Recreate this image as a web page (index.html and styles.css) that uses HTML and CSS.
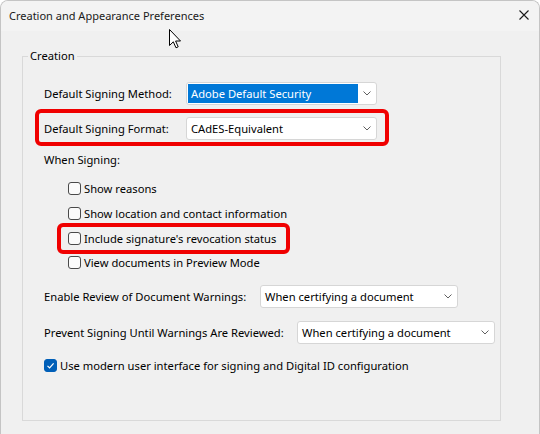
FILE: index.html
```html
<!DOCTYPE html>
<html>
<head>
<meta charset="utf-8">
<link rel="stylesheet" href="styles.css">
</head>
<body>
<div class="window">
  <div class="titlebar">
    <span class="title">Creation and Appearance Preferences</span>
    <svg class="close" width="10" height="10" viewBox="0 0 10 10"><path d="M0.5 0.5 L9.5 9.5 M9.5 0.5 L0.5 9.5" stroke="#1a1a1a" stroke-width="1.1" fill="none"/></svg>
  </div>
  <div class="content">
    <fieldset class="group">
      <legend>Creation</legend>
      <div class="group-body">
        <div class="field first">
          <span class="label w-short">Default Signing Method:</span>
          <div class="select w-191">
            <span class="value selected">Adobe Default Security</span>
            <span class="chev"><svg width="8" height="5" viewBox="0 0 8 5"><path d="M0.5 0.5 L4 4 L7.5 0.5" stroke="#606060" fill="none"/></svg></span>
          </div>
        </div>
        <div class="field callout callout-field">
          <span class="label w-short">Default Signing Format:</span>
          <div class="select w-191">
            <span class="value">CAdES-Equivalent</span>
            <span class="chev"><svg width="8" height="5" viewBox="0 0 8 5"><path d="M0.5 0.5 L4 4 L7.5 0.5" stroke="#606060" fill="none"/></svg></span>
          </div>
        </div>
        <div class="section-label">When Signing:</div>
        <div class="checks">
          <div class="check"><span class="box"></span><span>Show reasons</span></div>
          <div class="check"><span class="box"></span><span>Show location and contact information</span></div>
          <div class="check callout callout-check"><span class="box"></span><span>Include signature's revocation status</span></div>
          <div class="check"><span class="box"></span><span>View documents in Preview Mode</span></div>
        </div>
        <div class="field review">
          <span class="label w-review">Enable Review of Document Warnings:</span>
          <div class="select w-198">
            <span class="value">When certifying a document</span>
            <span class="chev"><svg width="8" height="5" viewBox="0 0 8 5"><path d="M0.5 0.5 L4 4 L7.5 0.5" stroke="#606060" fill="none"/></svg></span>
          </div>
        </div>
        <div class="field prevent">
          <span class="label w-prevent">Prevent Signing Until Warnings Are Reviewed:</span>
          <div class="select w-198">
            <span class="value">When certifying a document</span>
            <span class="chev"><svg width="8" height="5" viewBox="0 0 8 5"><path d="M0.5 0.5 L4 4 L7.5 0.5" stroke="#606060" fill="none"/></svg></span>
          </div>
        </div>
        <div class="check modern">
          <span class="box checked"><svg width="11" height="11" viewBox="0 0 11 11"><path d="M2.5 5.8 L4.6 7.9 L8.6 3.3" stroke="#fff" stroke-width="1.2" fill="none"/></svg></span>
          <span>Use modern user interface for signing and Digital ID configuration</span>
        </div>
      </div>
    </fieldset>
  </div>
  <svg class="cursor" width="13" height="20" viewBox="0 0 13 20"><path d="M0.5 0.5 L0.5 16.5 L4.3 12.8 L7 18.8 L9.2 17.8 L6.6 12 L11.5 12 Z" fill="#fff" stroke="#000" stroke-width="1" stroke-linejoin="miter"/></svg>
</div>
</body>
</html>
```
FILE: styles.css
```css
* { box-sizing: border-box; }
body {
  margin: 0;
  background: #fff;
  font-family: "Noto Sans", "Open Sans", sans-serif;
  font-size: 11.2px;
  color: #000;
}
.window {
  position: relative;
  width: 540px;
  height: 434px;
  border: 1px solid #c4c4c4;
  border-bottom: none;
  border-radius: 8px 8px 0 0;
  background: #f0f0f0;
  overflow: hidden;
  display: flex;
  flex-direction: column;
}
.titlebar {
  flex: none;
  height: 30px;
  background: #f3f3f3;
  display: flex;
  align-items: center;
  justify-content: space-between;
  padding: 0 10px 0 8px;
}
.title { color: #1a1a1a; line-height: 16px; font-size: 11px; }
.close { margin-bottom: 2px; }
.content { padding: 17px 0 0 21px; }
.group {
  margin: 0;
  width: 479px;
  border: 1px solid #d9d9d9;
  padding: 0 0 47px 5px;
}
.group legend {
  padding: 0 2px;
  line-height: 16px;
}
.group-body { padding: 18px 0 0 16px; }
.field { display: flex; align-items: center; }
.label { flex: none; line-height: 16px; white-space: nowrap; }
.w-short { width: 142px; }
.w-review { width: 216px; }
.w-prevent { width: 253px; }
.select {
  flex: none;
  height: 23px;
  background: #fff;
  border: 1px solid #d6d6d6;
  border-radius: 3px;
  display: flex;
  align-items: center;
  padding-left: 1px;
}
.w-191 { width: 191px; }
.w-198 { width: 198px; }
.value {
  flex: 1;
  height: 19px;
  line-height: 19px;
  padding-left: 3px;
  white-space: nowrap;
}
.value.selected { background: #0078d7; color: #fff; }
.chev {
  flex: none;
  width: 18px;
  display: flex;
  justify-content: center;
  align-items: center;
}
.callout {
  border: 4px solid #f00000;
  border-radius: 6px;
  width: fit-content;
}
.callout-field {
  margin: 4px 0 0 -9px;
  padding: 4px 8px 2px 5px;
}
.section-label { margin-top: 6px; line-height: 16px; }
.checks { padding-left: 24px; margin-top: 8px; }
.check {
  display: flex;
  align-items: center;
  gap: 3px;
  height: 25px;
  white-space: nowrap;
}
.callout-check {
  height: 31px;
  margin: -3px 0 -4px -11px;
  padding: 0 10px 0 7px;
}
.box {
  flex: none;
  width: 13px;
  height: 13px;
  border: 1px solid #4a4a4a;
  border-radius: 3px;
  background: #fbfbfb;
  display: flex;
  align-items: center;
  justify-content: center;
}
.box.checked { background: #005fb8; border-color: #005fb8; }
.review { margin-top: 10px; }
.prevent { margin-top: 13px; }
.modern { margin-top: 13px; height: 16px; }
.cursor { position: absolute; left: 168px; top: 28px; }
```
